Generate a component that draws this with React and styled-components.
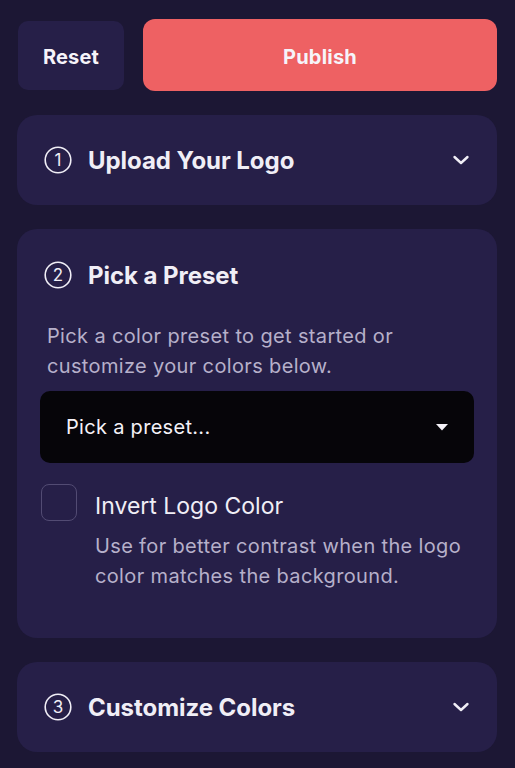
import React from 'react';
import styled, { createGlobalStyle } from 'styled-components';

const GlobalStyle = createGlobalStyle`
  html, body {
    margin: 0;
    padding: 0;
    background: #1c1734;
  }
  body {
    font-family: Inter, "Noto Sans", sans-serif;
    color: #f0eef6;
    -webkit-font-smoothing: antialiased;
  }
`;

const Page = styled.div`
  min-height: 768px;
  box-sizing: border-box;
  padding: 19px 18px 16px 17px;
  display: flex;
  flex-direction: column;
  gap: 24px;
`;

const Toolbar = styled.div`
  display: flex;
  align-items: center;
  gap: 19px;
  padding-left: 1px;
`;

const Button = styled.button`
  border: none;
  font-family: inherit;
  font-weight: 700;
  font-size: 20px;
  letter-spacing: 0.2px;
  padding: 3px 0 0;
  color: #f6f4fa;
  border-radius: ${(p) => (p.$primary ? '12px' : '10px')};
  height: ${(p) => (p.$primary ? '72px' : '69px')};
  background: ${(p) => (p.$primary ? '#ee6163' : '#261f48')};
  flex: ${(p) => (p.$primary ? '1' : '0 0 106px')};
  cursor: pointer;
`;

const Card = styled.section`
  background: #261f48;
  border-radius: 20px;
  padding: 0 23px;
  padding-bottom: ${(p) => (p.$open ? '47px' : '0')};
`;

const CardHeader = styled.div`
  height: ${(p) => (p.$open ? '92px' : '90px')};
  display: flex;
  align-items: center;
  padding-left: 4px;
  gap: 16px;
`;

const Title = styled.h2`
  margin: 0;
  flex: 1;
  font-size: 24px;
  font-weight: 700;
  color: #f0eef6;
  letter-spacing: -0.05px;
`;

const Chevron = styled.svg`
  width: 18px;
  height: 18px;
  margin-right: 4px;
`;

const Description = styled.p`
  margin: 0;
  font-size: 20px;
  line-height: 30px;
  letter-spacing: 0.35px;
  color: #b6b0ca;
  padding-left: ${(p) => p.$indent || '7px'};
`;

const Select = styled.div`
  margin-top: 10px;
  height: 72px;
  border-radius: 10px;
  background: #060509;
  display: flex;
  align-items: center;
  justify-content: space-between;
  padding: 0 26px;
  font-size: 20px;
  letter-spacing: 0.3px;
  color: #f4f2f8;
`;

const CheckRow = styled.div`
  margin-top: 21px;
  display: grid;
  grid-template-columns: 36px 1fr;
  column-gap: 18px;
  padding-left: 1px;
`;

const Checkbox = styled.span`
  width: 36px;
  height: 37px;
  box-sizing: border-box;
  border: 1.5px solid #524b73;
  border-radius: 8px;
`;

const CheckLabel = styled.div`
  font-size: 23px;
  line-height: 30px;
  padding-top: 7px;
  color: #f0eef6;
`;

const CheckText = styled.div`
  grid-column: 2;
  margin-top: 10px;
`;

function StepIcon({ n }) {
  return (
    <svg width="28" height="28" viewBox="0 0 28 28">
      <circle cx="14" cy="14" r="12.8" fill="none" stroke="#f0eef6" strokeWidth="1.6" />
      <text
        x="14"
        y="20"
        textAnchor="middle"
        fontSize="17"
        fontFamily="Inter, sans-serif"
        fontWeight="400"
        fill="#f0eef6"
      >
        {n}
      </text>
    </svg>
  );
}

function ChevronDown() {
  return (
    <Chevron viewBox="0 0 18 18">
      <path d="M2.5 6 L9 12 L15.5 6" fill="none" stroke="#f0eef6" strokeWidth="2.4" strokeLinecap="round" strokeLinejoin="round" />
    </Chevron>
  );
}

export default function App() {
  return (
    <>
      <GlobalStyle />
      <Page>
        <Toolbar>
          <Button>Reset</Button>
          <Button $primary>Publish</Button>
        </Toolbar>

        <Card>
          <CardHeader>
            <StepIcon n="1" />
            <Title>Upload Your Logo</Title>
            <ChevronDown />
          </CardHeader>
        </Card>

        <Card $open>
          <CardHeader $open>
            <StepIcon n="2" />
            <Title>Pick a Preset</Title>
          </CardHeader>
          <Description>
            Pick a color preset to get started or customize your colors below.
          </Description>
          <Select>
            <span>Pick a preset...</span>
            <svg width="12" height="7" viewBox="0 0 12 7">
              <path d="M0 0 H12 L6 6.5 Z" fill="#f4f2f8" />
            </svg>
          </Select>
          <CheckRow>
            <Checkbox />
            <CheckLabel>Invert Logo Color</CheckLabel>
            <CheckText>
              <Description $indent="0">
                Use for better contrast when the logo color matches the background.
              </Description>
            </CheckText>
          </CheckRow>
        </Card>

        <Card>
          <CardHeader>
            <StepIcon n="3" />
            <Title>Customize Colors</Title>
            <ChevronDown />
          </CardHeader>
        </Card>
      </Page>
    </>
  );
}
